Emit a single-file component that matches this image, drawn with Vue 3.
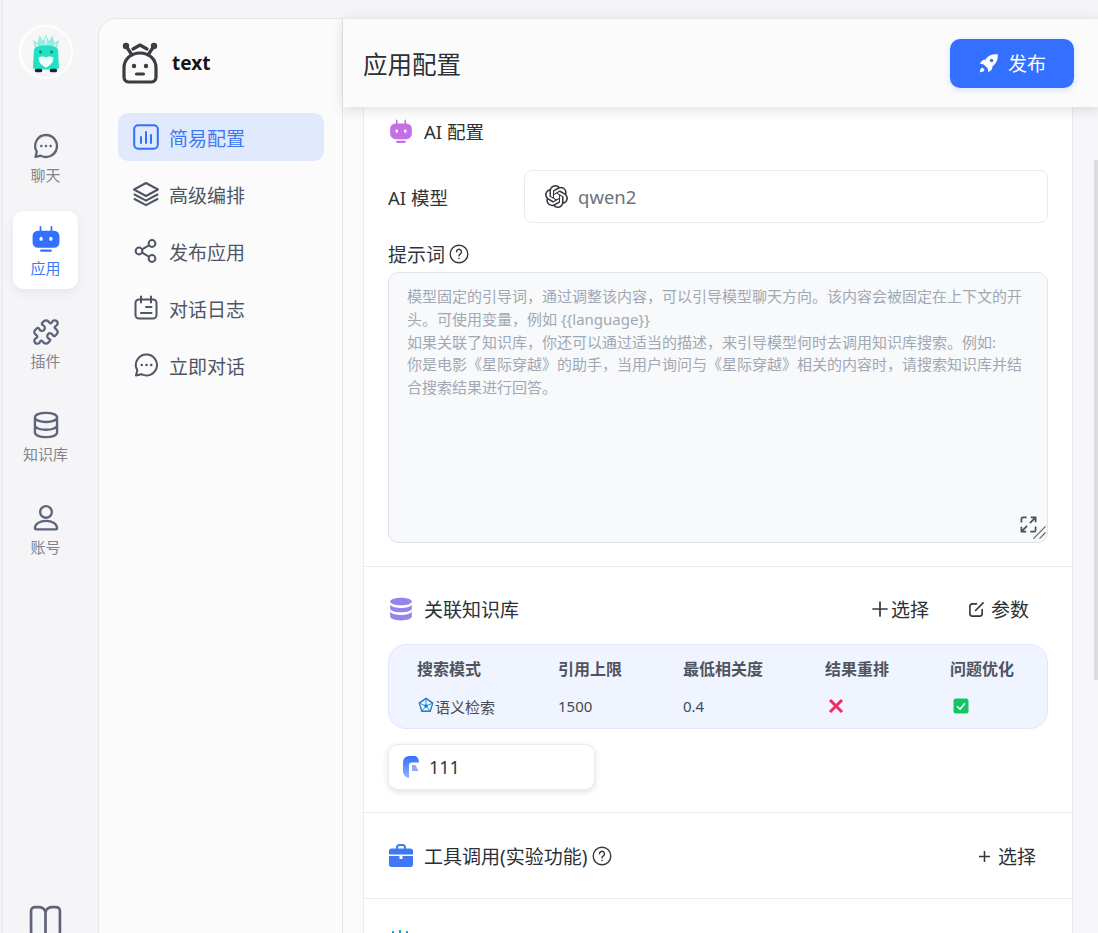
<script setup>
const openai = 'M22.2819 9.8211a5.9847 5.9847 0 0 0-.5157-4.9108 6.0462 6.0462 0 0 0-6.5098-2.9A6.0651 6.0651 0 0 0 4.9807 4.1818a5.9847 5.9847 0 0 0-3.9977 2.9 6.0462 6.0462 0 0 0 .7427 7.0966 5.98 5.98 0 0 0 .511 4.9107 6.051 6.051 0 0 0 6.5146 2.9001A5.9847 5.9847 0 0 0 13.2599 24a6.0557 6.0557 0 0 0 5.7718-4.2058 5.9894 5.9894 0 0 0 3.9977-2.9001 6.0557 6.0557 0 0 0-.7475-7.0729zm-9.022 12.6081a4.4755 4.4755 0 0 1-2.8764-1.0408l.1419-.0804 4.7783-2.7582a.7948.7948 0 0 0 .3927-.6813v-6.7369l2.02 1.1686a.071.071 0 0 1 .038.052v5.5826a4.504 4.504 0 0 1-4.4945 4.4944zm-9.6607-4.1254a4.4708 4.4708 0 0 1-.5346-3.0137l.142.0852 4.783 2.7582a.7712.7712 0 0 0 .7806 0l5.8428-3.3685v2.3324a.0804.0804 0 0 1-.0332.0615L9.74 19.9502a4.4992 4.4992 0 0 1-6.1408-1.6464zM2.3408 7.8956a4.485 4.485 0 0 1 2.3655-1.9728V11.6a.7664.7664 0 0 0 .3879.6765l5.8144 3.3543-2.0201 1.1685a.0757.0757 0 0 1-.071 0l-4.8303-2.7865A4.504 4.504 0 0 1 2.3408 7.872zm16.5963 3.8558L13.1038 8.364 15.1192 7.2a.0757.0757 0 0 1 .071 0l4.8303 2.7913a4.4944 4.4944 0 0 1-.6765 8.1042v-5.6772a.79.79 0 0 0-.407-.667zm2.0107-3.0231l-.142-.0852-4.7735-2.7818a.7759.7759 0 0 0-.7854 0L9.409 9.2297V6.8974a.0662.0662 0 0 1 .0284-.0615l4.8303-2.7866a4.4992 4.4992 0 0 1 6.6802 4.66zM8.3065 12.863l-2.02-1.1638a.0804.0804 0 0 1-.038-.0567V6.0742a4.4992 4.4992 0 0 1 7.3757-3.4537l-.142.0805L8.704 5.459a.7948.7948 0 0 0-.3927.6813zm1.0976-2.3654l2.602-1.4998 2.6069 1.4998v2.9994l-2.5974 1.4997-2.6067-1.4997Z'

const chat = 'M12 2.600a9.400 9.400 0 1 1-4.400 17.700L3 21.400l1.100-4.500A9.400 9.400 0 0 1 12 2.600z'
const puzzle = 'M19.439 7.85c-.049.322.059.648.289.878l1.568 1.568c.47.47.706 1.087.706 1.704s-.235 1.233-.706 1.704l-1.611 1.611a.98.98 0 0 1-.837.276c-.47-.07-.802-.48-.968-.925a2.501 2.501 0 1 0-3.214 3.214c.446.166.855.497.925.968a.979.979 0 0 1-.276.837l-1.61 1.61a2.404 2.404 0 0 1-1.705.707 2.402 2.402 0 0 1-1.704-.706l-1.568-1.568a1.026 1.026 0 0 0-.877-.29c-.493.074-.84.504-1.02.968a2.5 2.5 0 1 1-3.237-3.237c.464-.18.894-.527.967-1.02a1.026 1.026 0 0 0-.289-.877l-1.568-1.568A2.402 2.402 0 0 1 1.998 12c0-.617.236-1.234.706-1.704L4.23 8.77c.24-.24.581-.353.917-.303.515.077.877.528 1.073 1.01a2.5 2.5 0 1 0 3.259-3.259c-.482-.196-.933-.558-1.01-1.073-.05-.336.062-.676.303-.917l1.525-1.525A2.402 2.402 0 0 1 12 1.998c.617 0 1.234.236 1.704.706l1.568 1.568c.23.23.556.338.877.29.493-.074.84-.504 1.02-.968a2.5 2.5 0 1 1 3.237 3.237c-.464.18-.894.527-.967 1.02Z'
const db = 'M2.500 5.500C2.500 3.300 6.500 1.600 12 1.600s9.500 1.700 9.500 3.900v13c0 2.200-4 3.900-9.500 3.900s-9.500-1.700-9.500-3.900zM2.500 5.500c0 2.200 4 3.900 9.500 3.900s9.500-1.700 9.500-3.900M2.500 12.200c0 2.200 4 3.900 9.500 3.900s9.500-1.700 9.500-3.900'
const user = 'M12 1.800a5 5 0 1 1 0 10 5 5 0 0 1 0-10zM2.500 20.800c0-3.900 4.300-6.300 9.500-6.300s9.500 2.400 9.500 6.300c0 .6-.4.9-1 .9h-17c-.6 0-1-.3-1-.9z'
const robot = 'M7.300 1.600v3.900M16.700 1.600v3.900'

const navItems = [
  { label: '聊天', kind: 'chat' },
  { label: '应用', kind: 'robot', active: true },
  { label: '插件', d: puzzle },
  { label: '知识库', d: db },
  { label: '账号', d: user }
]

const menuItems = [
  { label: '简易配置', kind: 'chart', active: true },
  { label: '高级编排', kind: 'layers' },
  { label: '发布应用', kind: 'share' },
  { label: '对话日志', kind: 'log' },
  { label: '立即对话', kind: 'chat' }
]

const promptLines = [
  '模型固定的引导词，通过调整该内容，可以引导模型聊天方向。该内容会被固定在上下文的开',
  '头。可使用变量，例如 {{language}}',
  '如果关联了知识库，你还可以通过适当的描述，来引导模型何时去调用知识库搜索。例如:',
  '你是电影《星际穿越》的助手，当用户询问与《星际穿越》相关的内容时，请搜索知识库并结',
  '合搜索结果进行回答。'
]

const columns = ['搜索模式', '引用上限', '最低相关度', '结果重排', '问题优化']
</script>

<template>
  <div class="page">
    <nav class="rail">
      <div class="avatar">
        <svg viewBox="0 -3 54 54" width="50" height="50">
          <path d="M15 20l-2-9 5 3 2-8 4 6 3-7 3 7 4-6 2 8 5-3-2 9z" fill="#9aeadd" />
          <path d="M16 15l3 5M38 15l-3 5M27 8v8" stroke="#e3fbf7" stroke-width="1.500" fill="none" />
          <path d="M14 22c0-3 5-5 13-5s13 2 13 5l1 18c0 2-1 3-3 3H16c-2 0-3-1-3-3z" fill="#24e0c4" />
          <path d="M19 30c3-2 6-1 8 0 2-1 5-2 8 0 0 6-4 9-8 11-4-2-8-5-8-11z" fill="#f0fffc" />
          <circle cx="21" cy="24" r="1.500" fill="#127c70" />
          <circle cx="33" cy="24" r="1.500" fill="#127c70" />
          <rect x="15" y="42" width="8" height="4" rx="2" fill="#1c2230" />
          <rect x="31" y="42" width="8" height="4" rx="2" fill="#1c2230" />
        </svg>
      </div>
      <div class="rail-list">
        <a v-for="item in navItems" :key="item.label" class="rail-item" :class="{ on: item.active }">
          <svg v-if="item.kind === 'chat'" class="rail-icon" viewBox="0 0 24 24">
            <path :d="chat" class="line" />
            <circle cx="8" cy="12" r="1.100" class="dot" />
            <circle cx="12" cy="12" r="1.100" class="dot" />
            <circle cx="16" cy="12" r="1.100" class="dot" />
          </svg>
          <svg v-else-if="item.kind === 'robot'" class="rail-icon robot" viewBox="0 0 24 24">
            <path :d="robot" class="antenna" />
            <rect x="0.500" y="5" width="23" height="14.500" rx="4.500" fill="#3370ff" />
            <rect x="7" y="21" width="10" height="2" rx="1" fill="#3370ff" />
            <rect x="6.500" y="10" width="2.600" height="3.600" rx="1.300" fill="#fff" />
            <rect x="14.900" y="10" width="2.600" height="3.600" rx="1.300" fill="#fff" />
          </svg>
          <svg v-else class="rail-icon" viewBox="0 0 24 24"><path :d="item.d" class="line" /></svg>
          <span>{{ item.label }}</span>
        </a>
      </div>
      <svg class="book" viewBox="0 0 32 32">
        <path d="M16 6.500C15 3.500 12.500 2 9.500 2H6C3.500 2 2 3.500 2 6v20c0 2.500 1.500 4 4 4h20c2.500 0 4-1.500 4-4V6c0-2.500-1.500-4-4-4h-3.500C19.500 2 17 3.500 16 6.500zM16 6.500V30" />
      </svg>
    </nav>

    <div class="workspace">
      <aside class="side">
        <div class="brand">
          <svg class="brand-logo" viewBox="0 0 38 42">
            <path d="M5 4l6 9M33 4l-6 9" class="brand-line" />
            <circle cx="5" cy="4" r="3.200" fill="#3a3d42" />
            <circle cx="33" cy="4" r="3.200" fill="#3a3d42" />
            <path d="M12 7l7-4 7 4" class="brand-line" />
            <path d="M19 11c9 0 16 6 16 15v9c0 3-2 5-5 5H8c-3 0-5-2-5-5v-9c0-9 7-15 16-15z" class="brand-line" />
            <circle cx="13" cy="24" r="2.200" fill="#3a3d42" />
            <circle cx="25" cy="24" r="2.200" fill="#3a3d42" />
            <path d="M15.500 32h7" class="brand-line" />
          </svg>
          <strong>text</strong>
        </div>
        <ul class="menu">
          <li v-for="item in menuItems" :key="item.label" class="menu-item" :class="{ on: item.active }">
            <svg v-if="item.kind === 'chart'" class="menu-icon" viewBox="0 0 26 26">
              <rect x="1.200" y="1.200" width="23.600" height="23.600" rx="4" class="m-line blue" />
              <path d="M8 13v6M13 8v11M18 11v8" class="m-line blue" />
            </svg>
            <svg v-else-if="item.kind === 'layers'" class="menu-icon" viewBox="0 0 26 26">
              <path d="M13 2L25 8.500 13 15 1 8.500z" class="m-line" />
              <path d="M1.500 13.500L13 19.700l11.500-6.200M1.500 18L13 24.200 24.500 18" class="m-line" />
            </svg>
            <svg v-else-if="item.kind === 'share'" class="menu-icon" viewBox="0 0 26 26">
              <circle cx="6" cy="13" r="3.400" class="m-line" />
              <circle cx="19" cy="5.500" r="3.400" class="m-line" />
              <circle cx="19" cy="20.500" r="3.400" class="m-line" />
              <path d="M9 11.300l7-4M9 14.700l7 4" class="m-line" />
            </svg>
            <svg v-else-if="item.kind === 'log'" class="menu-icon" viewBox="0 0 26 26">
              <rect x="2.500" y="4.500" width="21" height="19" rx="3.500" class="m-line" />
              <path d="M8 1.500v6M18 1.500v6M13 12h5.500M8 18h10.500" class="m-line" />
            </svg>
            <svg v-else class="menu-icon" viewBox="0 0 26 26">
              <path d="M13.500 2.500a10.500 10.500 0 1 1-5 19.730L3 23.500l1.300-5.200A10.500 10.500 0 0 1 13.500 2.500z" class="m-line" />
              <circle cx="8.800" cy="13" r="1.300" fill="#4f5563" />
              <circle cx="13.500" cy="13" r="1.300" fill="#4f5563" />
              <circle cx="18.200" cy="13" r="1.300" fill="#4f5563" />
            </svg>
            <span>{{ item.label }}</span>
          </li>
        </ul>
      </aside>

      <main class="main">
        <header class="topbar">
          <h1>应用配置</h1>
          <button class="publish" type="button">
            <svg viewBox="0 0 24 24" width="21" height="21">
              <path d="M22.500 1.500c-6.500-.5-11 1.500-14 6L5.500 8 2 12l4.500 1 4.500 4.500 1 4.500 4-3.500.5-3C21 12 23 7.500 22.500 1.500zM15.500 10.500a2 2 0 1 1 0-4 2 2 0 0 1 0 4zM5 16.500c-1.500.5-2.500 2-3 5.500 3.500-.5 5-1.500 5.500-3z" fill="#fff" fill-rule="evenodd" />
            </svg>
            <span>发布</span>
          </button>
        </header>

        <div class="scroller">
          <div class="card">
            <section class="block ai">
              <div class="section-title ai-title">
                <svg viewBox="0 0 24 24" width="26" height="26">
                  <path d="M8 2v4M16 2v4" stroke="#c06fe0" stroke-width="1.400" stroke-linecap="round" />
                  <rect x="2" y="5" width="20" height="14.500" rx="5" fill="#c46fe6" />
                  <rect x="7.500" y="21" width="9" height="2" rx="1" fill="#c46fe6" />
                  <rect x="7" y="10.500" width="2.200" height="3" rx="1.100" fill="#fff" />
                  <rect x="14.800" y="10.500" width="2.200" height="3" rx="1.100" fill="#fff" />
                </svg>
                <span>AI 配置</span>
              </div>

              <div class="model-row">
                <label>AI 模型</label>
                <div class="model-box">
                  <svg viewBox="0 0 24 24" width="23" height="23"><path :d="openai" fill="#33363b" /></svg>
                  <span>qwen2</span>
                </div>
              </div>

              <div class="prompt-label">
                <span>提示词</span>
                <svg class="help" viewBox="0 0 20 20">
                  <circle cx="10" cy="10" r="8.800" />
                  <path d="M7.500 7.800a2.500 2.500 0 1 1 3.800 2.100c-.8.500-1.300 1-1.300 2" />
                  <circle class="help-dot" cx="10" cy="14.500" r=".8" />
                </svg>
              </div>

              <div class="prompt">
                <p v-for="line in promptLines" :key="line">{{ line }}</p>
                <svg class="expand" viewBox="0 0 18 18">
                  <path d="M1.500 7V3c0-1 .5-1.500 1.500-1.500h4M16.500 11v4c0 1-.5 1.500-1.500 1.500h-4" />
                  <path d="M10.500 7.500l6-6M11.500 1.500h5v5M7.500 10.500l-6 6M1.500 11.500v5h5" />
                </svg>
                <svg class="grip" viewBox="0 0 14 14"><path d="M0.500 13.500L13.500 0.500M7 13.500l6.500-6.500" /></svg>
              </div>
            </section>

            <section class="block kb">
              <div class="section-head">
                <div class="section-title">
                  <svg viewBox="0 0 24 24" width="26" height="26">
                    <path d="M2 5c0-2 4.500-3.500 10-3.500S22 3 22 5s-4.500 3.500-10 3.500S2 7 2 5z" fill="#9683ec" />
                    <path d="M2 8c1.500 2 5.500 3 10 3s8.500-1 10-3v3.500c0 2-4.500 3.500-10 3.500S2 13.500 2 11.500z" fill="#9683ec" />
                    <path d="M2 14.500c1.500 2 5.500 3 10 3s8.500-1 10-3V19c0 2-4.500 3.500-10 3.500S2 21 2 19z" fill="#9683ec" />
                  </svg>
                  <span>关联知识库</span>
                </div>
                <div class="actions">
                  <a class="action plus-action">
                    <svg viewBox="0 0 16 16" width="16" height="16"><path d="M8 1v14M1 8h14" /></svg>
                    <span>选择</span>
                  </a>
                  <a class="action">
                    <svg viewBox="0 0 18 18" width="17" height="17"><path d="M9 3H4.500C3 3 2 4 2 5.500v8C2 15 3 16 4.500 16h8c1.500 0 2.500-1 2.500-2.500V9M8 10l8-8" /></svg>
                    <span>参数</span>
                  </a>
                </div>
              </div>

              <div class="params">
                <div class="params-grid">
                  <b v-for="c in columns" :key="c">{{ c }}</b>
                  <span class="mode">
                    <svg viewBox="0 0 20 20" width="18" height="18">
                      <path d="M10 1.500l7.500 5.300-2.900 9H5.400l-2.900-9z" fill="none" stroke="#2178c9" stroke-width="1.500" />
                      <path d="M2.500 6.800L10 10l7.500-3.200M10 1.500V10M5.400 15.800L10 10l4.600 5.800" fill="none" stroke="#14a0c8" stroke-width="1.100" />
                      <circle cx="10" cy="10" r="2" fill="#2178c9" />
                    </svg>语义检索
                  </span>
                  <span>1500</span>
                  <span>0.4</span>
                  <span class="mark">
                    <svg viewBox="0 0 16 16" width="16" height="16"><path d="M2 2l12 12M14 2L2 14" stroke="#ef2d63" stroke-width="3" /></svg>
                  </span>
                  <span class="mark">
                    <svg viewBox="0 0 16 16" width="16" height="16">
                      <rect x="0.500" y="0.500" width="15" height="15" rx="2.500" fill="#13c566" />
                      <path d="M4 8.200l3 3 5-6" fill="none" stroke="#fff" stroke-width="1.500" />
                    </svg>
                  </span>
                </div>
              </div>

              <div class="chip">
                <svg viewBox="0 0 16 22" width="16" height="22">
                  <defs>
                    <linearGradient id="chipg" x1="0" y1="0" x2="0" y2="1">
                      <stop offset="0" stop-color="#3370ff" />
                      <stop offset="1" stop-color="#8fb0ff" />
                    </linearGradient>
                  </defs>
                  <path d="M0 7c0-4.500 2.500-7 7-7h4c3 0 5 2.500 5 6.500H9C7 6.500 6 7.500 6 9.500V22C2 21 0 18 0 15z" fill="url(#chipg)" />
                  <path d="M9 9h3.500l3 6H9z" fill="#8fabf5" />
                </svg>
                <span>111</span>
              </div>
            </section>

            <section class="block tools">
              <div class="section-head">
                <div class="section-title">
                  <svg viewBox="0 0 26 26" width="26" height="26">
                    <path d="M9 6V4.500C9 3 10 2 11.500 2h3C16 2 17 3 17 4.500V6" fill="none" stroke="#3f78f6" stroke-width="2" />
                    <path d="M1 8c0-1.500 1-2.500 2.500-2.500h19C24 5.500 25 6.500 25 8v3.500H1z" fill="#3f78f6" />
                    <path d="M1 13h10.500v3h3v-3H25v8.500c0 1.500-1 2.500-2.500 2.500h-19C2 24 1 23 1 21.500z" fill="#3f78f6" />
                  </svg>
                  <span>工具调用(实验功能)</span>
                  <svg class="help tool-help" viewBox="0 0 20 20">
                    <circle cx="10" cy="10" r="8.800" />
                    <path d="M7.500 7.800a2.500 2.500 0 1 1 3.800 2.100c-.8.500-1.300 1-1.300 2" />
                    <circle class="help-dot" cx="10" cy="14.500" r=".8" />
                  </svg>
                </div>
                <a class="action tool-action">
                  <svg viewBox="0 0 12 12" width="11" height="11"><path d="M6 .5v11M.5 6h11" /></svg>
                  <span>选择</span>
                </a>
              </div>
            </section>

            <section class="last">
              <svg viewBox="0 0 20 20" width="20" height="20">
                <path d="M3 1v5M10 0v3M17 1v5" stroke="#12a5d8" stroke-width="2" fill="none" />
              </svg>
            </section>
          </div>
          <div class="thumb"></div>
        </div>
      </main>
    </div>
  </div>
</template>

<style>
html, body { margin: 0; background: #f5f5f7; }
</style>

<style scoped>
.page {
  display: flex;
  height: 933px;
  width: 100%;
  overflow: hidden;
  box-sizing: border-box;
  border-left: 2px solid #ececef;
  margin-left: 1px;
  background: #f5f5f8;
  color: #31343a;
  font-family: "Noto Sans", "Noto Sans CJK SC", sans-serif;
}
.rail {
  width: 95px;
  flex: none;
  display: flex;
  flex-direction: column;
  align-items: center;
  padding-top: 25px;
  box-sizing: border-box;
}
.avatar {
  width: 50px;
  height: 50px;
  flex: none;
  margin-left: -10px;
  border: 2px solid #fff;
  border-radius: 50%;
  background: #f6f6f8;
  overflow: hidden;
}
.avatar svg { display: block; }
.rail-list {
  margin-top: 39px;
  display: flex;
  flex: none;
  flex-direction: column;
  gap: 15px;
  margin-left: -10px;
}
.rail-item {
  width: 65px;
  height: 78px;
  box-sizing: border-box;
  padding-top: 14px;
  display: flex;
  flex-direction: column;
  align-items: center;
  border-radius: 10px;
  color: #80848f;
  font-size: 15px;
  line-height: 20px;
}
.rail-item span { margin-top: 5px; }
.rail-item.on {
  background: #fff;
  color: #3f78f6;
  box-shadow: 0 4px 10px rgba(60, 70, 100, 0.08);
}
.rail-icon { width: 28px; height: 28px; flex: none; display: block; }
.line { fill: none; stroke: #5f6478; stroke-width: 2; stroke-linejoin: round; }
.dot { fill: #5f6478; }
.antenna { fill: none; stroke: #3370ff; stroke-width: 1.500; stroke-linecap: round; }
.book {
  width: 33px;
  height: 33px;
  margin: 337px 0 0 -10px;
  flex: none;
  fill: none;
  stroke: #5f6478;
  stroke-width: 2.600;
}
.workspace { flex: 1; min-width: 0; display: flex; padding-top: 18px; }
.side {
  width: 245px;
  flex: none;
  background: #fbfbfc;
  border: 1px solid #e6e6ea;
  border-width: 1px 1px 0 1px;
  border-top-left-radius: 18px;
  box-sizing: border-box;
  padding: 0 19px;
}
.brand { height: 94px; display: flex; align-items: center; gap: 13px; padding-left: 3px; box-sizing: border-box; padding-bottom: 6px; }
.brand-logo { width: 38px; height: 42px; flex: none; }
.brand-line { fill: none; stroke: #3a3d42; stroke-width: 3.200; stroke-linecap: round; stroke-linejoin: round; }
.brand strong { font-size: 19px; font-weight: 700; color: #14161a; }
.menu { list-style: none; margin: 0; padding: 0; display: flex; flex-direction: column; gap: 9px; }
.menu-item {
  height: 48px;
  width: 206px;
  display: flex;
  align-items: center;
  gap: 10px;
  padding-left: 15px;
  box-sizing: border-box;
  border-radius: 10px;
  font-size: 19px;
  color: #4f5563;
}
.menu-item span { margin-top: 2px; }
.menu-item.on { background: #e1e9fd; color: #3f78f6; }
.menu-icon { width: 26px; height: 26px; flex: none; }
.m-line { fill: none; stroke: #4f5563; stroke-width: 2; stroke-linecap: round; stroke-linejoin: round; }
.m-line.blue { stroke: #3370ff; }
.main { flex: 1; min-width: 0; display: flex; flex-direction: column; height: 915px; }
.topbar {
  height: 89px;
  flex: none;
  box-sizing: border-box;
  border-top: 1px solid #e6e6ea;
  position: relative;
  z-index: 2;
  background: #fbfbfc;
  display: flex;
  align-items: center;
  justify-content: space-between;
  padding: 0 25px 0 20px;
  box-shadow: 0 3px 12px rgba(40, 45, 60, 0.14);
}
.topbar h1 { margin: 0; font-size: 24.500px; font-weight: 400; color: #2c2f35; }
.publish {
  width: 124px;
  height: 49px;
  display: flex;
  align-items: center;
  justify-content: center;
  gap: 9px;
  border: 0;
  border-radius: 10px;
  background: #3370ff;
  color: #fff;
  font: inherit;
  font-size: 19px;
  box-shadow: 0 2px 6px rgba(51, 112, 255, 0.18);
}
.scroller {
  flex: 1;
  min-height: 0;
  display: flex;
  overflow: hidden;
  position: relative;
  padding-left: 20px;
  background: linear-gradient(90deg, #fafafb 0, #fafafb 20px, #f7f7f9 20px);
}
.card {
  width: 710px;
  flex: none;
  box-sizing: border-box;
  background: #fff;
  border: 1px solid #ececef;
  border-width: 0 1px;
}
.thumb {
  position: absolute;
  right: 0;
  top: 53px;
  width: 5px;
  height: 520px;
  background: #dcdde0;
}
.block { padding: 0 24px; border-bottom: 1px solid #ececef; box-sizing: border-box; }
.section-title { display: flex; align-items: center; gap: 10px; font-size: 19px; color: #2c2f35; }
.section-title svg { flex: none; }
.ai { height: 460px; }
.ai-title { height: 48px; margin-bottom: 15px; font-size: 18.500px; }
.model-row { display: flex; align-items: center; height: 53px; font-size: 18.500px; }
.model-row label { width: 136px; flex: none; }
.model-box {
  width: 524px;
  height: 53px;
  box-sizing: border-box;
  border: 1px solid #e9ebef;
  border-radius: 8px;
  display: flex;
  align-items: center;
  gap: 10px;
  padding-left: 20px;
  color: #6d727c;
}
.prompt-label { margin-top: 18px; height: 26px; display: flex; align-items: center; gap: 4px; font-size: 19px; }
.help { width: 20px; height: 20px; flex: none; fill: none; stroke: #33363b; stroke-width: 1.400; stroke-linecap: round; }
.help-dot { fill: #33363b; stroke: none; }
.tool-help { margin-left: -5px; }
.prompt {
  position: relative;
  margin-top: 5px;
  height: 271px;
  box-sizing: border-box;
  padding: 12px 18px;
  border: 1px solid #e0e4ea;
  border-radius: 10px;
  background: #f7f9fb;
  color: #a1a8b3;
  font-size: 15px;
  line-height: 22.800px;
}
.prompt p { margin: 0; white-space: nowrap; }
.expand {
  position: absolute;
  right: 10px;
  bottom: 9px;
  width: 17px;
  height: 17px;
  fill: none;
  stroke: #4b4f57;
  stroke-width: 1.800;
}
.grip {
  position: absolute;
  right: 1px;
  bottom: 3px;
  width: 13px;
  height: 13px;
  fill: none;
  stroke: #5a5d64;
  stroke-width: 1.200;
}
.kb { height: 246px; padding-top: 22px; }
.section-head { display: flex; align-items: center; justify-content: space-between; height: 40px; }
.actions { display: flex; align-items: center; gap: 39px; padding-right: 19px; }
.action { display: flex; align-items: center; gap: 6px; font-size: 19px; color: #2c2f35; }
.action svg { fill: none; stroke: #33363b; stroke-width: 1.700; stroke-linecap: round; }
.plus-action { gap: 3px; }
.params {
  margin-top: 15px;
  height: 85px;
  box-sizing: border-box;
  border: 1px solid #dfe7fb;
  border-radius: 18px;
  background: #f0f4fe;
  padding: 4px 0 0 28px;
}
.params-grid {
  display: grid;
  grid-template-columns: 141px 125px 142px 125px auto;
  grid-auto-rows: 38px;
  align-items: center;
  font-size: 15px;
  color: #474b53;
}
.params-grid b { font-size: 16px; font-weight: 700; color: #50545d; }
.mode { display: flex; align-items: center; }
.mark { display: flex; padding-left: 3px; }
.chip {
  margin-top: 15px;
  width: 207px;
  height: 46px;
  box-sizing: border-box;
  border: 1px solid #ececef;
  border-radius: 10px;
  display: flex;
  align-items: center;
  gap: 10px;
  padding-left: 14px;
  background: #fff;
  font-size: 18px;
  box-shadow: 0 2px 6px rgba(40, 45, 60, 0.15);
  color: #33363b;
}
.tools { height: 86px; padding-top: 23px; }
.tool-action { gap: 8px; padding-right: 12px; }
.last { padding: 31px 0 0 26px; }
</style>
